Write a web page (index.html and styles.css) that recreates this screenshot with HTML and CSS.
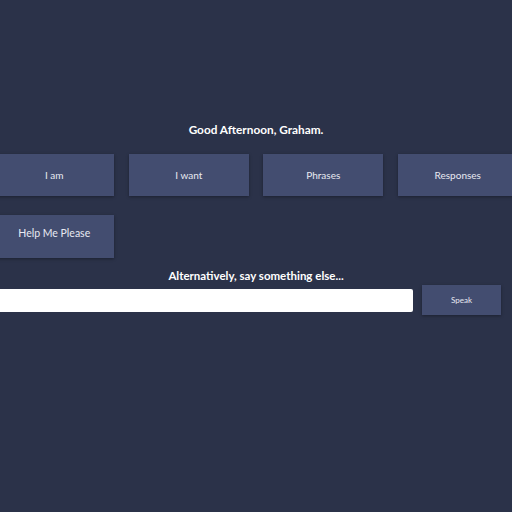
FILE: index.html
```html
<!DOCTYPE html>
<html>
<head>
<meta charset="utf-8">
<link rel="stylesheet" href="styles.css">
</head>
<body>
<main class="page">
  <h1 class="greeting">Good Afternoon, Graham.</h1>
  <div class="grid">
    <button class="tile">I am</button>
    <button class="tile">I want</button>
    <button class="tile">Phrases</button>
    <button class="tile">Responses</button>
    <button class="tile tile-tall">Help Me Please</button>
  </div>
  <h2 class="alt">Alternatively, say something else...</h2>
  <div class="say">
    <input class="say-input" type="text">
    <button class="speak">Speak</button>
  </div>
</main>
</body>
</html>
```
FILE: styles.css
```css
html, body {
  margin: 0;
  padding: 0;
  background: #2b3249;
  width: 512px;
  height: 512px;
  overflow: hidden;
}
body {
  font-family: "Lato", "Open Sans", sans-serif;
  color: #ffffff;
}
.page {
  display: flex;
  flex-direction: column;
  align-items: center;
  padding-top: 121px;
}
.greeting {
  margin: 0;
  font-size: 11.8px;
  font-weight: 700;
  line-height: 18px;
}
.grid {
  margin-top: 15px;
  display: grid;
  grid-template-columns: repeat(4, 120px);
  column-gap: 14.5px;
  row-gap: 19px;
  justify-content: center;
  width: 512px;
}
.tile {
  height: 42px;
  border: none;
  margin: 0;
  background: #434d70;
  color: #e8eaf2;
  font-family: inherit;
  font-size: 10px;
  box-shadow: 0 1px 3px rgba(0, 0, 0, 0.35);
  padding: 0;
}
.tile-tall {
  height: 43px;
  font-size: 10.5px;
  padding-bottom: 7px;
}
.alt {
  margin: 9px 0 0;
  font-size: 11.5px;
  font-weight: 700;
  line-height: 17px;
}
.say {
  margin-top: 1px;
  width: 512px;
  display: flex;
  align-items: center;
  justify-content: flex-end;
  padding-right: 11px;
  box-sizing: border-box;
  gap: 9px;
}
.say-input {
  width: 430px;
  height: 23px;
  flex: none;
  border: none;
  border-radius: 2px;
  background: #ffffff;
  margin: 0;
  padding: 0;
}
.speak {
  width: 79px;
  height: 30px;
  flex: none;
  border: none;
  margin: 0;
  padding: 0;
  background: #434d70;
  color: #e8eaf2;
  font-family: inherit;
  font-size: 8px;
  box-shadow: 0 1px 3px rgba(0, 0, 0, 0.35);
}
```
